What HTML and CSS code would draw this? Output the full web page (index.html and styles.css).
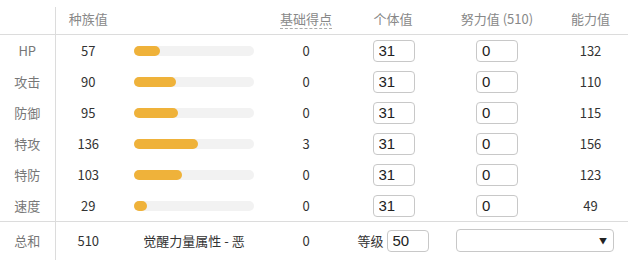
FILE: index.html
```html
<!doctype html>
<html>
<head>
<meta charset="UTF-8">
<title>能力值计算</title>
<link rel="stylesheet" href="styles.css">
</head>
<body>

  <table class="stats">
    <colgroup>
      <col class="c-name">
      <col class="c-base">
      <col class="c-bar">
      <col class="c-point">
      <col class="c-iv">
      <col class="c-ev">
      <col class="c-total">
    </colgroup>
    <thead>
      <tr>
        <th class="name"></th>
        <th>种族值</th>
        <th></th>
        <th><span class="hint">基础得点</span></th>
        <th>个体值</th>
        <th>努力值 (510)</th>
        <th>能力值</th>
      </tr>
    </thead>
    <tbody>
      <tr>
        <th class="name">HP</th>
        <td>57</td>
        <td><div class="bar"><div class="fill" style="width: 26px"></div></div></td>
        <td>0</td>
        <td><input class="num" value="31"></td>
        <td><input class="num" value="0"></td>
        <td>132</td>
      </tr>
      <tr>
        <th class="name">攻击</th>
        <td>90</td>
        <td><div class="bar"><div class="fill" style="width: 42px"></div></div></td>
        <td>0</td>
        <td><input class="num" value="31"></td>
        <td><input class="num" value="0"></td>
        <td>110</td>
      </tr>
      <tr>
        <th class="name">防御</th>
        <td>95</td>
        <td><div class="bar"><div class="fill" style="width: 44px"></div></div></td>
        <td>0</td>
        <td><input class="num" value="31"></td>
        <td><input class="num" value="0"></td>
        <td>115</td>
      </tr>
      <tr>
        <th class="name">特攻</th>
        <td>136</td>
        <td><div class="bar"><div class="fill" style="width: 64px"></div></div></td>
        <td>3</td>
        <td><input class="num" value="31"></td>
        <td><input class="num" value="0"></td>
        <td>156</td>
      </tr>
      <tr>
        <th class="name">特防</th>
        <td>103</td>
        <td><div class="bar"><div class="fill" style="width: 48px"></div></div></td>
        <td>0</td>
        <td><input class="num" value="31"></td>
        <td><input class="num" value="0"></td>
        <td>123</td>
      </tr>
      <tr>
        <th class="name">速度</th>
        <td>29</td>
        <td><div class="bar"><div class="fill" style="width: 13px"></div></div></td>
        <td>0</td>
        <td><input class="num" value="31"></td>
        <td><input class="num" value="0"></td>
        <td>49</td>
      </tr>
    </tbody>
    <tfoot>
      <tr>
        <th class="name">总和</th>
        <td>510</td>
        <td>觉醒力量属性 - 恶</td>
        <td>0</td>
        <td class="level"><label>等级</label><input class="num" value="50"></td>
        <td colspan="2" class="pick">
          <div class="select"><span class="arrow">▼</span></div>
        </td>
      </tr>
    </tfoot>
  </table>

</body>
</html>
```

FILE: styles.css
```css
body {
  margin: 0;
  padding-top: 7px;
  font-family: "Noto Sans CJK SC", "Noto Sans", sans-serif;
  font-size: 13px;
  color: #333;
  background: white;
}

.stats {
  width: 628px;
  border-collapse: collapse;
  table-layout: fixed;
}

.c-name { width: 55px; }
.c-base { width: 66px; }
.c-bar { width: 146px; }
.c-point { width: 78px; }
.c-iv { width: 96px; }
.c-ev { width: 112px; }
.c-total { width: 75px; }

.stats th, .stats td {
  padding: 0;
  text-align: center;
  font-weight: normal;
  line-height: 18px;
}

.stats thead th {
  height: 24px;
  color: #888;
  border-bottom: 1px solid #dcdcdc;
  vertical-align: top;
  padding-top: 3px;
}

.stats tbody td, .stats tbody th {
  height: 31px;
}

.stats .name {
  color: #777;
  border-right: 1px solid #dcdcdc;
}

.stats tfoot td, .stats tfoot th {
  height: 37px;
  border-top: 1px solid #dcdcdc;
  vertical-align: middle;
  padding-bottom: 1px;
}

.hint {
  border-bottom: 1px dashed #aaa;
}

/* base stat bar, scaled to 255 */
.bar {
  width: 120px;
  height: 10px;
  margin-left: 13px;
  border-radius: 5px;
  background: #f2f2f2;
}
.fill {
  height: 10px;
  border-radius: 5px;
  background: #efb23a;
}

input.num {
  box-sizing: border-box;
  width: 42px;
  height: 22px;
  padding: 0 0 0 5px;
  border: 1px solid #c8c8c8;
  border-radius: 4px;
  font-family: "Liberation Sans", sans-serif;
  font-size: 15px;
  color: #222;
  outline: none;
  vertical-align: middle;
}

.stats tbody td:nth-child(5) input.num {
  margin-left: 1px;
}

.level label {
  margin-right: 3px;
  vertical-align: middle;
}

.pick {
  text-align: left;
}
.select {
  box-sizing: border-box;
  width: 158px;
  height: 23px;
  margin-left: 15px;
  border: 1px solid #c8c8c8;
  border-radius: 4px;
  display: flex;
  justify-content: flex-end;
  align-items: center;
  padding-right: 6px;
}
.arrow {
  font-size: 8px;
  color: #222;
  line-height: 1;
}
```
